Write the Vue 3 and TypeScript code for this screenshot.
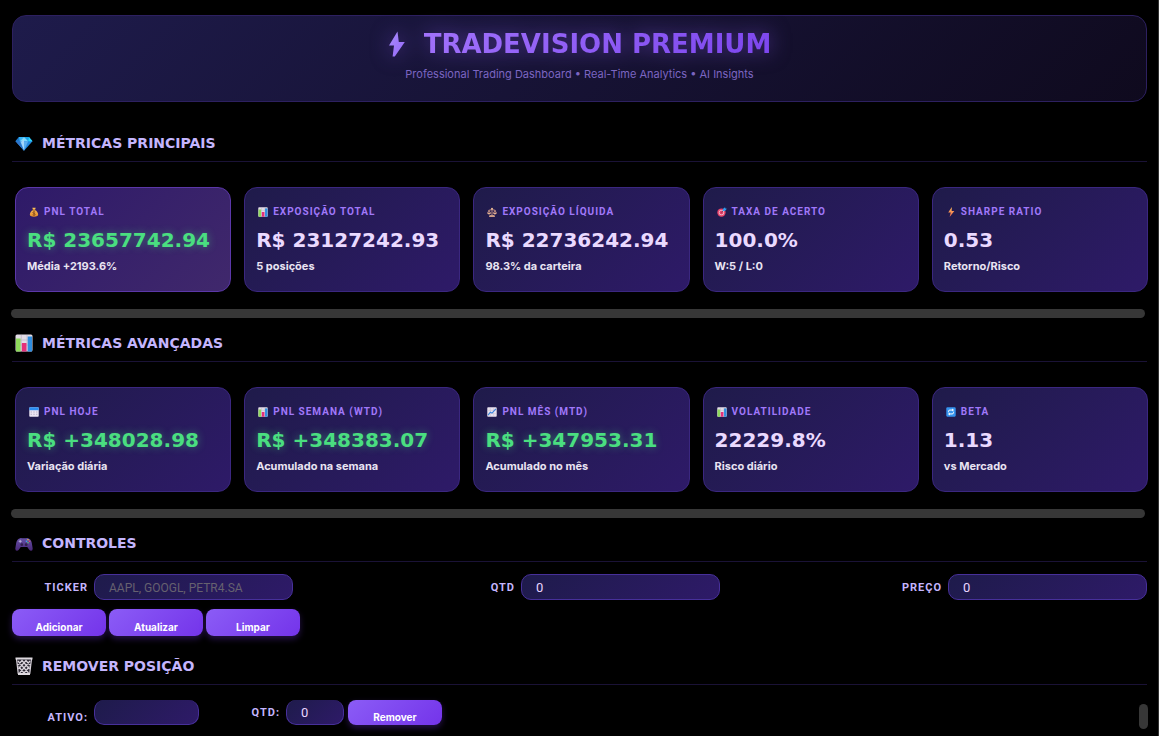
<script setup lang="ts">
import { ref } from 'vue'

interface Metric {
  icon: string
  label: string
  value: string
  note: string
  gain?: boolean
  featured?: boolean
}

interface Section {
  icon: string
  title: string
  metrics: Metric[]
}

const sections: Section[] = [
  {
    icon: 'gem',
    title: 'MÉTRICAS PRINCIPAIS',
    metrics: [
      { icon: 'bag', label: 'PNL TOTAL', value: 'R$ 23657742.94', note: 'Média +2193.6%', gain: true, featured: true },
      { icon: 'bars', label: 'EXPOSIÇÃO TOTAL', value: 'R$ 23127242.93', note: '5 posições' },
      { icon: 'scales', label: 'EXPOSIÇÃO LÍQUIDA', value: 'R$ 22736242.94', note: '98.3% da carteira' },
      { icon: 'target', label: 'TAXA DE ACERTO', value: '100.0%', note: 'W:5 / L:0' },
      { icon: 'spark', label: 'SHARPE RATIO', value: '0.53', note: 'Retorno/Risco' },
    ],
  },
  {
    icon: 'bars',
    title: 'MÉTRICAS AVANÇADAS',
    metrics: [
      { icon: 'calendar', label: 'PNL HOJE', value: 'R$ +348028.98', note: 'Variação diária', gain: true },
      { icon: 'bars', label: 'PNL SEMANA (WTD)', value: 'R$ +348383.07', note: 'Acumulado na semana', gain: true },
      { icon: 'trend', label: 'PNL MÊS (MTD)', value: 'R$ +347953.31', note: 'Acumulado no mês', gain: true },
      { icon: 'bars', label: 'VOLATILIDADE', value: '22229.8%', note: 'Risco diário' },
      { icon: 'cycle', label: 'BETA', value: '1.13', note: 'vs Mercado' },
    ],
  },
]

const ticker = ref('')
const quantity = ref('0')
const price = ref('0')
const asset = ref('')
const removeQuantity = ref('0')

function clearForm() {
  ticker.value = ''
  quantity.value = '0'
  price.value = '0'
}
</script>

<template>
  <svg class="sprite" aria-hidden="true">
    <defs>
      <linearGradient id="bolt-fill" x1="0" y1="0" x2="1" y2="1">
        <stop offset="0" stop-color="#a78bfa" />
        <stop offset="1" stop-color="#9568f8" />
      </linearGradient>
      <linearGradient id="bag-fill" x1="0" y1="0" x2="0" y2="1">
        <stop offset="0" stop-color="#ffc65a" />
        <stop offset="1" stop-color="#e38a2c" />
      </linearGradient>
      <linearGradient id="spark-fill" x1="0" y1="0" x2="0" y2="1">
        <stop offset="0" stop-color="#ffc05c" />
        <stop offset="1" stop-color="#f0644c" />
      </linearGradient>
      <linearGradient id="pad-fill" x1="0" y1="0" x2="0" y2="1">
        <stop offset="0" stop-color="#6650a8" />
        <stop offset="1" stop-color="#492878" />
      </linearGradient>
    </defs>
    <symbol id="icon-bolt" viewBox="0 0 18 26">
      <path d="M9.500 0.500 1 14.500h5L4.600 25.500h2.200L16.800 11h-6z" fill="url(#bolt-fill)" />
    </symbol>
    <symbol id="icon-gem" viewBox="0 0 18 18">
      <path d="M4 3h10l3.500 4.200L9 16.800.5 7.200z" fill="#2589df" />
      <path d="M4 3 .5 7.200h4.300z" fill="#1c77c8" />
      <path d="M4 3h5L4.800 7.200z" fill="#36b5f5" />
      <path d="M9 3h5l-.8 4.200z" fill="#17a3e8" />
      <path d="M14 3l3.500 4.200h-4.300z" fill="#2bd8fa" />
      <path d="M9 3 4.800 7.200h8.400z" fill="#7ed8fa" />
      <path d="M4.800 7.200h8.400L9 16.800z" fill="#5baef0" />
      <path d="M9 5v11.800L6 8z" fill="#a5d6fa" />
      <path d="M.5 7.200h4.300L9 16.800z" fill="#2f75ca" />
    </symbol>
    <symbol id="icon-bars" viewBox="0 0 18 18">
      <rect x="0.500" y="0.500" width="17" height="17" rx="1.500" fill="#e2dce6" />
      <path d="M6.300 1v16M12 1v16M1 6h16M1 11h16" stroke="#bdb4c6" stroke-width="0.700" />
      <rect x="1" y="4.500" width="4.600" height="13" fill="#8ed95b" />
      <rect x="6.900" y="9" width="4.600" height="8.500" fill="#e5307a" />
      <rect x="12.700" y="2.500" width="4.300" height="15" fill="#2f8ee0" />
    </symbol>
    <symbol id="icon-bag" viewBox="0 0 18 18">
      <path d="M6 1.500h6L10.800 5.500c3.200 1.600 5.700 5 5.700 8.200 0 2.600-2 3.800-7.500 3.800s-7.500-1.200-7.500-3.800c0-3.200 2.500-6.600 5.700-8.200z" fill="url(#bag-fill)" />
      <path d="M6.500 5.500h5" stroke="#8a4b20" stroke-width="1.500" />
      <path d="M11.200 9.200c-1.400-1-4.500-.8-4.400 1 .1 1.700 4.500.9 4.500 2.900 0 1.700-3.200 1.900-4.800.8M9 7.500v8.500" fill="none" stroke="#7e431a" stroke-width="1.300" />
    </symbol>
    <symbol id="icon-scales" viewBox="0 0 18 18">
      <path d="M9 2v13M3 6l6-1.500L15 6M3.500 6 1.200 11M3.500 6l2.800 5M14.500 6l-2.800 5M14.500 6l2.300 5M4 16.500h10" fill="none" stroke="#d9a08c" stroke-width="1.500" />
      <path d="M.5 10.500h6.500c-.3 4-6.200 4-6.500 0zM11 10.500h6.500c-.3 4-6.200 4-6.500 0zM5 15h8l1.500 2.500h-11z" fill="#e5b191" />
      <circle cx="9" cy="3" r="1.700" fill="#f0c198" />
    </symbol>
    <symbol id="icon-target" viewBox="0 0 18 18">
      <circle cx="8" cy="10" r="7.500" fill="#e8456c" />
      <circle cx="8" cy="10" r="4.800" fill="#f0b9cb" />
      <circle cx="8" cy="10" r="3.300" fill="#e13b65" />
      <path d="M8 10 14 4" stroke="#75405d" stroke-width="1.500" />
      <path d="M10.500 3.500 14.500 .3l.5 2.500 2.800.5-3.500 4-3.800.1z" fill="#2e9cef" />
    </symbol>
    <symbol id="icon-spark" viewBox="0 0 18 18">
      <path d="M10.500 0 4 10h4.500L6.500 18 15 7h-4.800z" fill="url(#spark-fill)" />
    </symbol>
    <symbol id="icon-calendar" viewBox="0 0 18 18">
      <rect x="0.500" y="0.500" width="17" height="17" rx="1.500" fill="#ece5f3" />
      <path d="M2 .5h14q1.500 0 1.500 1.500v4H.5V2Q.5.5 2 .5z" fill="#2b8df1" />
      <path d="M3 8h2v2H3zM8 8h2v2H8zM13 8h2v2h-2zM3 12h2v2H3zM8 12h2v2H8zM13 12h2v2h-2z" fill="#aaa0ba" />
    </symbol>
    <symbol id="icon-trend" viewBox="0 0 18 18">
      <rect x="0.500" y="0.500" width="17" height="17" rx="1.500" fill="#e9e2ef" />
      <path d="M6 1v16M12 1v16M1 6h16M1 12h16" stroke="#c2bacc" stroke-width="0.800" />
      <path d="M2 14.500 6 9.500l3 1.500 7-7.500" fill="none" stroke="#3783dc" stroke-width="1.900" />
    </symbol>
    <symbol id="icon-cycle" viewBox="0 0 18 18">
      <rect x="0.500" y="0.500" width="17" height="17" rx="2" fill="#3593ee" />
      <path d="M4.500 9.500v-1.500q0-2.500 2.500-2.500h5M13.500 8.500v1.500q0 2.500-2.500 2.500h-5" fill="none" stroke="#fff" stroke-width="1.800" />
      <path d="M11 2.800 14.500 5.500 11 8.200zM7 9.800 3.500 12.500 7 15.200z" fill="#fff" />
    </symbol>
    <symbol id="icon-pad" viewBox="0 0 18 18">
      <path d="M4.500 4.500q1-1 2.500-.3h4q1.500-.7 2.500.3 2.500.5 3.300 4.500l.9 5.500q0 2.300-1.500 2.300-1.300 0-2.200-1.300L12.300 13H5.700L4 15.500Q3.100 16.800 1.800 16.800q-1.500 0-1.500-2.300L1.200 9Q2 5 4.500 4.500z" fill="url(#pad-fill)" />
      <path d="M5.200 5.800v3M3.700 7.300h3" stroke="#b9add8" stroke-width="1" />
      <circle cx="13" cy="5.700" r="0.800" fill="#f0c03d" />
      <circle cx="14.600" cy="7.200" r="0.800" fill="#ef5262" />
      <circle cx="11.500" cy="7.200" r="0.800" fill="#37aef0" />
      <circle cx="13" cy="8.700" r="0.800" fill="#58cc70" />
      <circle cx="6.800" cy="10.700" r="1.400" fill="#33204f" />
      <circle cx="11.200" cy="10.700" r="1.400" fill="#33204f" />
    </symbol>
    <symbol id="icon-bin" viewBox="0 0 18 18">
      <path d="M1.500 2h15L15 17.500H3z" fill="#292631" />
      <path d="M1.500 2 3.300 17M16.500 2l-1.800 15M3 4l10.500 12M15 4 4.500 16M6.500 3l8 9M11.500 3l-8 9M10.500 3l4.500 5M7.500 3 3 8M3.500 9.500l6 7M14.500 9.500l-6 7" stroke="#dad4dc" stroke-width="1.200" />
      <path d="M3 17h12M.5 1.500h17" stroke="#ded9df" stroke-width="1.800" />
    </symbol>
  </svg>

  <main class="page">
    <header class="hero">
      <h1 class="brand">
        <svg class="brand-icon" aria-hidden="true"><use href="#icon-bolt" /></svg>
        <span class="brand-name">TRADEVISION PREMIUM</span>
      </h1>
      <p class="tagline">Professional Trading Dashboard • Real-Time Analytics • AI Insights</p>
    </header>

    <section v-for="section in sections" :key="section.title" class="metrics">
      <h2 class="heading">
        <svg class="heading-icon" aria-hidden="true"><use :href="`#icon-${section.icon}`" /></svg>
        {{ section.title }}
      </h2>
      <div class="cards">
        <article v-for="metric in section.metrics" :key="metric.label" class="card" :class="{ featured: metric.featured }">
          <h3 class="card-label">
            <svg class="card-icon" aria-hidden="true"><use :href="`#icon-${metric.icon}`" /></svg>
            {{ metric.label }}
          </h3>
          <p class="card-value" :class="{ gain: metric.gain }">{{ metric.value }}</p>
          <p class="card-note">{{ metric.note }}</p>
        </article>
      </div>
      <div class="track"></div>
    </section>

    <section>
      <h2 class="heading">
        <svg class="heading-icon" aria-hidden="true"><use href="#icon-pad" /></svg>
        CONTROLES
      </h2>
      <form class="controls" @submit.prevent>
        <div class="fields">
          <div class="field">
            <label for="ticker">TICKER</label>
            <input id="ticker" v-model="ticker" type="text" placeholder="AAPL, GOOGL, PETR4.SA" />
          </div>
          <div class="field">
            <label for="quantity">QTD</label>
            <input id="quantity" v-model="quantity" type="text" inputmode="numeric" />
          </div>
          <div class="field">
            <label for="price">PREÇO</label>
            <input id="price" v-model="price" type="text" inputmode="decimal" />
          </div>
        </div>
        <div class="actions">
          <button type="submit">Adicionar</button>
          <button type="button">Atualizar</button>
          <button type="button" @click="clearForm">Limpar</button>
        </div>
      </form>
    </section>

    <section>
      <h2 class="heading">
        <svg class="heading-icon" aria-hidden="true"><use href="#icon-bin" /></svg>
        REMOVER POSIÇÃO
      </h2>
      <form class="removal" @submit.prevent>
        <label class="asset-label" for="asset">ATIVO:</label>
        <input id="asset" v-model="asset" class="asset-input" type="text" />
        <label class="amount-label" for="amount">QTD:</label>
        <input id="amount" v-model="removeQuantity" class="amount-input" type="text" inputmode="numeric" />
        <button type="submit">Remover</button>
        <span class="thumb"></span>
      </form>
    </section>
  </main>
</template>

<style>
body {
  background: #000;
}
</style>

<style scoped>
* {
  box-sizing: border-box;
}

.sprite {
  position: absolute;
  width: 0;
  height: 0;
}

.page {
  min-height: 100vh;
  padding: 15px 11px 7px 12px;
  border-right: 1px solid #333;
  background: #000;
  color: #e9e4f2;
  font-family: Inter, "Liberation Sans", sans-serif;
}

h1,
h2,
h3,
p {
  margin: 0;
}

.hero {
  margin-bottom: 25px;
  padding: 14px 20px 20px;
  border: 1px solid #2d2060;
  border-radius: 14px;
  background: linear-gradient(135deg, #1e1b4b 0%, #0f0a1e 100%);
  text-align: center;
}

.brand {
  display: flex;
  justify-content: center;
  align-items: center;
  gap: 18px;
  margin-bottom: 9px;
  font: 700 26px/28px "DejaVu Sans", sans-serif;
  filter: drop-shadow(0 0 10px rgba(139, 92, 246, 0.5));
}

.brand-icon {
  width: 18px;
  height: 26px;
}

.brand-name {
  background: linear-gradient(135deg, #a172fb, #7c45ee);
  background-clip: text;
  -webkit-background-clip: text;
  color: transparent;
}

.tagline {
  color: #7c66c2;
  font-size: 11px;
  line-height: 14px;
}

.heading {
  display: flex;
  align-items: center;
  gap: 9px;
  padding: 8px 3px 10px;
  border-bottom: 1px solid #1a1236;
  color: #c4b5fd;
  font: 700 14px/16px "DejaVu Sans", sans-serif;
}

.heading-icon {
  width: 18px;
  height: 18px;
  margin: -1px 0;
}

.cards {
  display: grid;
  grid-template-columns: repeat(5, minmax(0, 1fr));
  gap: 13px;
  margin: 25px -1px 17px 3px;
}

.card {
  padding: 17px 11px;
  border: 1px solid #3b2780;
  border-radius: 13px;
  background: linear-gradient(135deg, #1f1b4a 0%, #2e1a68 100%);
  white-space: nowrap;
}

.featured {
  border-color: #5b37a8;
  background: linear-gradient(135deg, #2e1a68 0%, #40286c 100%);
}

.card-label {
  display: flex;
  align-items: center;
  gap: 5px;
  padding-left: 2px;
  margin-bottom: 9px;
  color: #a078fa;
  font-family: Roboto, sans-serif;
  font-size: 10px;
  font-weight: 700;
  line-height: 14px;
  letter-spacing: 1px;
}

.card-icon {
  width: 10px;
  height: 10px;
}

.card-value {
  margin-bottom: 6px;
  color: #ead9ff;
  font: 700 20px/24px "DejaVu Sans", sans-serif;
}

.gain {
  color: #4ade80;
  text-shadow: 0 0 8px rgba(74, 222, 128, 0.45);
}

.card-note {
  font-size: 11px;
  font-weight: 700;
  line-height: 16px;
}

.track {
  height: 9px;
  margin: 0 2px 9px -1px;
  border-radius: 5px;
  background: #373737;
}

.controls {
  padding: 12px 0 14px;
}

.fields {
  display: flex;
  justify-content: space-between;
  margin-bottom: 9px;
}

.field {
  display: flex;
  align-items: center;
  gap: 6px;
}

.field label,
.asset-label {
  width: 76px;
  text-align: right;
}

label {
  padding-top: 2px;
  color: #c4b5fd;
  font-family: Roboto, sans-serif;
  font-size: 11px;
  font-weight: 700;
  line-height: 14px;
  letter-spacing: 1px;
}

input {
  min-width: 0;
  width: 199px;
  height: 26px;
  padding: 0 14px;
  border: 1px solid #47309a;
  border-radius: 10px;
  outline: none;
  background: linear-gradient(135deg, #1e1b4b 0%, #2e1a68 100%);
  color: #e9d5ff;
  font: 400 13px/16px Roboto, "Liberation Sans", sans-serif;
}

input::placeholder {
  color: #66616f;
  font-size: 12px;
  opacity: 1;
}

.actions {
  display: flex;
  gap: 3px;
}

button {
  width: 94px;
  height: 27px;
  padding: 9px 0 0;
  border: 0;
  border-radius: 8px;
  background: linear-gradient(135deg, #8b5cf6 0%, #7434ea 100%);
  box-shadow: 0 3px 6px rgba(124, 58, 237, 0.3);
  color: #fff;
  font: 700 10px/16px Inter, "Liberation Sans", sans-serif;
  cursor: pointer;
}

.removal {
  display: flex;
  align-items: flex-start;
  padding-top: 15px;
}

.removal input,
.removal button {
  height: 25px;
}

.removal input {
  border-top: 0;
}

.asset-label {
  margin: 9px 6px 0 0;
}

.removal .asset-input {
  width: 105px;
}

.amount-label {
  width: 81px;
  margin: 4px 6px 0 0;
  text-align: right;
}

.removal .amount-input {
  width: 58px;
  margin-right: 4px;
}

.thumb {
  width: 9px;
  height: 25px;
  margin: 4px -1px 0 auto;
  border-radius: 5px;
  background: #373737;
}
</style>
